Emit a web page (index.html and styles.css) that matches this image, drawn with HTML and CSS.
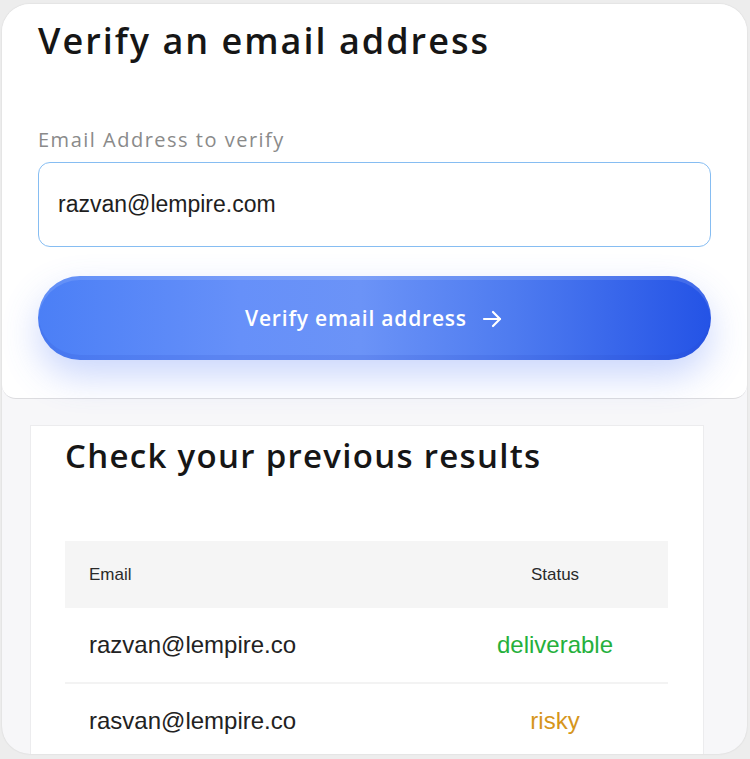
FILE: index.html
```html
<!DOCTYPE html>
<html lang="en">
<head>
    <meta charset="UTF-8">
    <meta name="viewport" content="width=device-width, initial-scale=1.0">
    <title>Verify an email address</title>
    <link rel="stylesheet" href="styles.css">
</head>
<body>
    <div class="frame">
        <!-- Top: verify form -->
        <div class="verify">
            <h1 class="title">Verify an email address</h1>
            <label class="label" for="emailInput">Email Address to verify</label>
            <input type="text" id="emailInput" class="emailInput" value="razvan@lempire.com">
            <button class="verifyBtn">
                Verify email address
                <svg class="arrow" width="24" height="24" viewBox="0 0 24 24" fill="none" stroke="currentColor" stroke-width="2.2" stroke-linecap="round" stroke-linejoin="round">
                    <path d="M4 12h16"/>
                    <path d="M13 5l7 7-7 7"/>
                </svg>
            </button>
        </div>

        <!-- Bottom: previous results -->
        <div class="results">
            <div class="resultsCard">
                <h2 class="subtitle">Check your previous results</h2>
                <table class="resultsTable">
                    <thead>
                        <tr>
                            <th class="colEmail">Email</th>
                            <th class="colStatus">Status</th>
                        </tr>
                    </thead>
                    <tbody>
                        <tr>
                            <td class="colEmail">razvan@lempire.co</td>
                            <td class="colStatus deliverable">deliverable</td>
                        </tr>
                        <tr>
                            <td class="colEmail">rasvan@lempire.co</td>
                            <td class="colStatus risky">risky</td>
                        </tr>
                    </tbody>
                </table>
            </div>
        </div>
    </div>
</body>
</html>
```

FILE: styles.css
```css
* {
    box-sizing: border-box;
}

body, html {
    margin: 0;
    padding: 0;
    height: 100%;
    background-color: #ededed;
}

/* Outer rounded frame */
.frame {
    margin: 4px 3px 0 2px;
    height: 750px;
    border-radius: 28px;
    background: #f7f7f9;
    overflow: hidden;
    box-shadow: 0 0 2px rgba(0, 0, 0, 0.12);
    font-family: 'Open Sans', sans-serif;
}

/* Top section */
.verify {
    background: #fff;
    padding: 12px 36px 38px 36px;
    border-bottom: 1px solid #dcdcdf;
    border-radius: 0 0 14px 14px;
    display: flex;
    flex-direction: column;
}

.title {
    margin: 0;
    font-size: 36px;
    font-weight: 600;
    color: #161616;
    letter-spacing: 2px;
    line-height: 50px;
}

.label {
    margin-top: 61px;
    font-size: 20px;
    letter-spacing: 1.5px;
    color: #8a8a8a;
    line-height: 26px;
}

.emailInput {
    margin-top: 9px;
    height: 85px;
    border: 1.5px solid #86bdf2;
    border-radius: 12px;
    padding: 0 19px;
    font-family: 'Liberation Sans', Arial, sans-serif;
    font-size: 23px;
    color: #1e1e1e;
    background: #fff;
    outline: none;
}

.verifyBtn {
    margin-top: 29px;
    height: 84px;
    border: none;
    border-radius: 42px;
    background: linear-gradient(90deg, #4b7ff6 0%, #6690f9 30%, #6b93f7 48%, #4f7cf0 70%, #2453e6 100%);
    box-shadow: 0 16px 36px rgba(80, 120, 245, 0.3), inset 0 -5px 0 rgba(40, 70, 200, 0.14), inset 0 4px 0 rgba(255, 255, 255, 0.12);
    color: #fff;
    font-family: 'Open Sans', sans-serif;
    font-size: 21px;
    font-weight: 600;
    letter-spacing: 0.8px;
    display: flex;
    align-items: center;
    justify-content: center;
    gap: 13px;
    cursor: pointer;
}

.arrow {
    margin-top: 1px;
}

/* Bottom section */
.results {
    padding: 26px 43px 0 28px;
}

.resultsCard {
    background: #fff;
    border: 1px solid #ececee;
    border-bottom: none;
    padding: 10px 35px 0 34px;
    height: 340px;
}

.subtitle {
    margin: 0;
    font-size: 33px;
    font-weight: 600;
    letter-spacing: 1.3px;
    color: #161616;
    line-height: 40px;
}

.resultsTable {
    margin-top: 65px;
    width: 100%;
    border-collapse: collapse;
    font-family: 'Liberation Sans', Arial, sans-serif;
}

.resultsTable th {
    background: #f5f5f5;
    height: 67px;
    font-size: 17px;
    font-weight: normal;
    color: #2a2a2a;
}

.resultsTable td {
    height: 75px;
    font-size: 24px;
    color: #222;
    border-bottom: 2px solid #f3f3f3;
}

.colEmail {
    text-align: left;
    padding-left: 24px;
}

.colStatus {
    text-align: center;
    width: 226px;
}

.deliverable {
    color: #25b03c !important;
}

.risky {
    color: #d6961c !important;
}
```
